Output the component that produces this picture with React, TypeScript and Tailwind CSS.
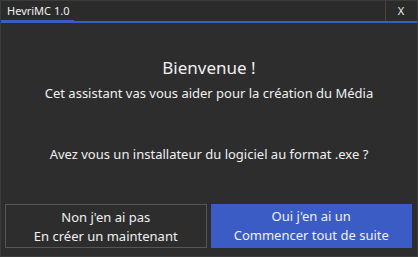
export default function App() {
  const font = { fontFamily: '"Segoe UI", "Noto Sans", "Open Sans", sans-serif' };
  return (
    <div className="w-[418px] h-[257px] bg-[#2d2d2d] flex flex-col text-[#f0f0f0] border border-[#3c3c3c]" style={font}>
      <div className="h-[22px] flex items-stretch bg-[#2b2b2b] border-b-2 border-[#3b5cc4]">
        <div className="pl-[6px] pr-[5px] flex items-center text-[11px] leading-none border-b-[3px] border-[#3b5cc4] -mb-[2px]">HevriMC 1.0</div>
        <div className="flex-1" />
        <div className="w-[31px] mr-[1px] flex items-center justify-center text-[11px] border-l border-[#444]">X</div>
      </div>
      <div className="flex-1 flex flex-col items-center">
        <div className="mt-[33px] text-[17px] leading-[24px]">Bienvenue !</div>
        <div className="mt-[4px] text-[13px] leading-[18px]">Cet assistant vas vous aider pour la création du Média</div>
        <div className="mt-[43px] text-[13px] leading-[18px]">Avez vous un installateur du logiciel au format .exe ?</div>
      </div>
      <div className="flex gap-[4px] pl-[4px] pr-[5px] pb-[8px]">
        <div className="flex-1 h-[44px] border border-[#555] flex flex-col items-center justify-center text-[13px] leading-[19px] pt-[1px]">
          <div>Non j'en ai pas</div>
          <div>En créer un maintenant</div>
        </div>
        <div className="flex-1 h-[44px] bg-[#3b5cc4] border border-[#3b5cc4] flex flex-col items-center justify-center text-[13px] leading-[19px]">
          <div>Oui j'en ai un</div>
          <div>Commencer tout de suite</div>
        </div>
      </div>
    </div>
  );
}
